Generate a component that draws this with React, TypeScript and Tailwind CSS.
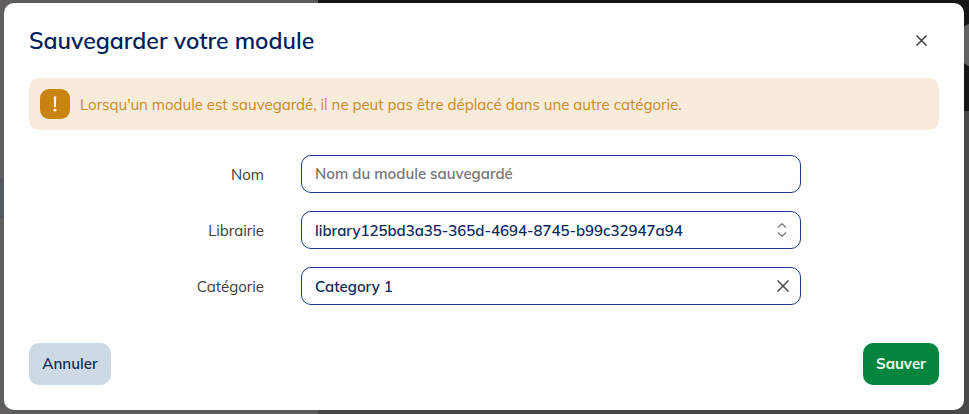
import { useState } from 'react';

const fieldClass =
  "block h-[38px] w-full rounded-[10px] border border-[#1d3a8a] bg-white pl-[13px] pr-10 text-[15px] font-semibold text-[#0a2a5c] outline-none placeholder:text-[#757575] placeholder:opacity-100";

const labelClass = 'pr-[37px] pt-[3px] text-right text-[15px] text-[#3c3c3c]';

function CrossIcon({ className }: { className?: string }) {
  return (
    <svg viewBox="0 0 12 12" className={className} fill="none" stroke="currentColor" aria-hidden="true">
      <path d="M0.5 0.5 L11.5 11.5 M11.5 0.5 L0.5 11.5" />
    </svg>
  );
}

function PageBehind() {
  return (
    <div className="absolute inset-0 flex overflow-hidden bg-[#484848]" aria-hidden="true">
      <div className="flex w-3 flex-col bg-[#62605f]">
        <div className="mt-[177px] h-[42px] bg-[#55585d]" />
      </div>
      <div className="w-[306px] bg-[#5c5b5b]" />
      <div className="flex-1">
        <div className="flex h-[111px] items-start justify-end bg-[#161616] pt-[22px]">
          <div className="-mr-8 size-[46px] rounded-full bg-[#626262]" />
        </div>
      </div>
    </div>
  );
}

export default function App() {
  const [name, setName] = useState('');
  const [category, setCategory] = useState('Category 1');

  return (
    <div className="relative min-h-screen pt-[3px] pr-[5px] pb-1 pl-1 font-['Mulish','Open_Sans',sans-serif]">
      <PageBehind />

      <div
        role="dialog"
        aria-labelledby="dialog-title"
        className="relative rounded-[10px] bg-white px-[25px] pt-[21px] pb-[25px]"
      >
        <header className="flex h-8 items-center justify-between">
          <h1 id="dialog-title" className="pt-0.5 text-[23px] font-semibold text-[#00205a]">
            Sauvegarder votre module
          </h1>
          <button type="button" aria-label="Fermer" className="mr-3 text-[#444]">
            <CrossIcon className="size-[11px] stroke-[1.7]" />
          </button>
        </header>

        <div role="alert" className="mt-[22px] flex min-h-[52px] items-center gap-2.5 rounded-[10px] bg-[#f7ebda] px-[11px]">
          <span className="flex size-[30px] shrink-0 items-center justify-center rounded-[9px] bg-[#c88412]">
            <svg viewBox="0 0 4 16" className="h-4 w-1" fill="#fff" aria-hidden="true">
              <path d="M0.8 0.5 H3.2 L2.9 11 H1.1 Z" />
              <circle cx="2" cy="14.2" r="1.4" />
            </svg>
          </span>
          <p className="pt-0.5 text-[15px] text-[#cb8a1e]">
            Lorsqu'un module est sauvegardé, il ne peut pas être déplacé dans une autre catégorie.
          </p>
        </div>

        <form onSubmit={(e) => e.preventDefault()}>
          <div className="mt-[25px] grid grid-cols-[272fr_500fr_138fr] items-center gap-y-[18px]">
            <label htmlFor="name" className={labelClass}>
              Nom
            </label>
            <input
              id="name"
              type="text"
              value={name}
              onChange={(e) => setName(e.target.value)}
              placeholder="Nom du module sauvegardé"
              className={`pb-0.5 ${fieldClass}`}
            />

            <label htmlFor="library" className={`col-start-1 ${labelClass}`}>
              Librairie
            </label>
            <div className="relative">
              <select id="library" className={`appearance-none pt-0.5 ${fieldClass}`}>
                <option>library125bd3a35-365d-4694-8745-b99c32947a94</option>
              </select>
              <svg
                viewBox="0 0 10 14"
                className="pointer-events-none absolute top-3 right-[14px] h-3.5 w-2.5 text-[#777]"
                fill="none"
                stroke="currentColor"
                strokeWidth="1.3"
                aria-hidden="true"
              >
                <path d="M1 4.5 L5 0.8 L9 4.5 M1 9.5 L5 13.2 L9 9.5" />
              </svg>
            </div>

            <label htmlFor="category" className={`col-start-1 ${labelClass}`}>
              Catégorie
            </label>
            <div className="relative">
              <input
                id="category"
                type="text"
                value={category}
                onChange={(e) => setCategory(e.target.value)}
                className={fieldClass}
              />
              <button
                type="button"
                aria-label="Effacer"
                onClick={() => setCategory('')}
                className="absolute inset-y-0 right-3 text-[#4a4a4a]"
              >
                <CrossIcon className="size-3 stroke-[1.5]" />
              </button>
            </div>
          </div>

          <footer className="mt-[38px] flex justify-between">
            <button
              type="button"
              className="h-[42px] min-w-[82px] rounded-[10px] bg-[#cdd9e3] px-[13px] text-[15px] font-semibold text-[#0f2b5b]"
            >
              Annuler
            </button>
            <button type="submit" className="h-[42px] rounded-[10px] bg-[#04843c] px-[13px] text-[15px] font-bold text-[#eefaf2]">
              Sauver
            </button>
          </footer>
        </form>
      </div>
    </div>
  );
}
